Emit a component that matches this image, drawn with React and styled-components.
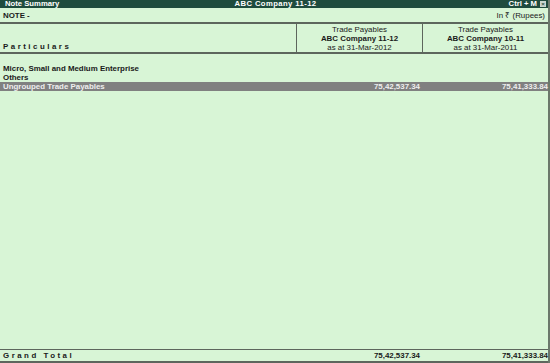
import React from 'react'
import styled, { createGlobalStyle } from 'styled-components'

const Global = createGlobalStyle`
  html, body { margin: 0; padding: 0; }
  body {
    width: 550px;
    height: 363px;
    overflow: hidden;
    background: #d8f5d6;
    font-family: "Liberation Sans", Arial, sans-serif;
    color: #1a1a1a;
  }
`

const Screen = styled.div`
  width: 550px;
  height: 363px;
  display: flex;
  flex-direction: column;
  background: #d8f5d6;
  border-right: 2px solid #6b786b;
  box-sizing: border-box;
`

const TitleBar = styled.div`
  height: 8px;
  background: #1f4c3e;
  color: #fff;
  font-weight: bold;
  font-size: 7.7px;
  line-height: 8px;
  display: grid;
  grid-template-columns: 1fr auto 1fr;
  align-items: center;
  padding: 0 2px 0 5px;
`

const Title = styled.span`
  justify-self: ${p => p.$align || 'start'};
  display: flex;
  align-items: center;
  gap: 3px;
  letter-spacing: ${p => (p.$align === 'center' ? '0.4px' : '0')};
`

const CloseBox = styled.span`
  width: 6px;
  height: 6px;
  background: #c9d6cf;
  color: #1f4c3e;
  font-size: 6px;
  line-height: 6px;
  text-align: center;
`

const InfoRow = styled.div`
  height: 14px;
  display: flex;
  justify-content: space-between;
  align-items: center;
  padding: 0 3px 0 3px;
  font-size: 7.9px;
  border-bottom: 2px solid #5d665d;
`

const Bold = styled.span`
  font-weight: bold;
`

const HeadGrid = styled.div`
  display: grid;
  grid-template-columns: 1fr 126px 126px;
  height: 28px;
  border-bottom: 2px solid #5d665d;
`

const HeadCell = styled.div`
  display: flex;
  flex-direction: column;
  justify-content: ${p => (p.$label ? 'flex-end' : 'center')};
  align-items: ${p => (p.$label ? 'flex-start' : 'center')};
  padding: ${p => (p.$label ? '0 0 1px 3px' : '0')};
  border-left: ${p => (p.$label ? 'none' : '1px solid #5d665d')};
  font-size: 7.9px;
  line-height: 9px;
`

const Spaced = styled.span`
  font-weight: bold;
  letter-spacing: 2.5px;
`

const Body = styled.div`
  flex: 1;
  padding-top: 10px;
  border-bottom: 1px solid #5d665d;
`

const Row = styled.div`
  display: grid;
  grid-template-columns: 1fr 126px 126px;
  align-items: center;
  height: 9px;
  font-size: 7.9px;
  font-weight: bold;
  padding-left: 3px;
  background: ${p => (p.$hl ? '#808080' : 'transparent')};
  color: ${p => (p.$hl ? '#eeeeee' : '#1a1a1a')};
`

const Amount = styled.span`
  text-align: right;
  padding-right: ${p => p.$pad || 0}px;
`

const TotalRow = styled.div`
  display: grid;
  grid-template-columns: 1fr 126px 126px;
  height: 11px;
  align-items: center;
  font-size: 7.9px;
  font-weight: bold;
  padding-left: 3px;
  border-bottom: 2px solid #5d665d;
`

export default function App() {
  return (
    <>
      <Global />
      <Screen>
        <TitleBar>
          <Title>Note Summary</Title>
          <Title $align="center">ABC Company 11-12</Title>
          <Title $align="end">
            Ctrl + M <CloseBox>×</CloseBox>
          </Title>
        </TitleBar>
        <InfoRow>
          <Bold>NOTE -</Bold>
          <span>In ₹ (Rupees)</span>
        </InfoRow>
        <HeadGrid>
          <HeadCell $label>
            <Spaced>Particulars</Spaced>
          </HeadCell>
          <HeadCell>
            <span>Trade Payables</span>
            <Bold>ABC Company 11-12</Bold>
            <span>as at 31-Mar-2012</span>
          </HeadCell>
          <HeadCell>
            <span>Trade Payables</span>
            <Bold>ABC Company 10-11</Bold>
            <span>as at 31-Mar-2011</span>
          </HeadCell>
        </HeadGrid>
        <Body>
          <Row>Micro, Small and Medium Enterprise</Row>
          <Row>Others</Row>
          <Row $hl>
            <span>Ungrouped Trade Payables</span>
            <Amount $pad={2}>75,42,537.34</Amount>
            <Amount>75,41,333.84</Amount>
          </Row>
        </Body>
        <TotalRow>
          <Spaced>Grand Total</Spaced>
          <Amount $pad={2}>75,42,537.34</Amount>
          <Amount>75,41,333.84</Amount>
        </TotalRow>
      </Screen>
    </>
  )
}
